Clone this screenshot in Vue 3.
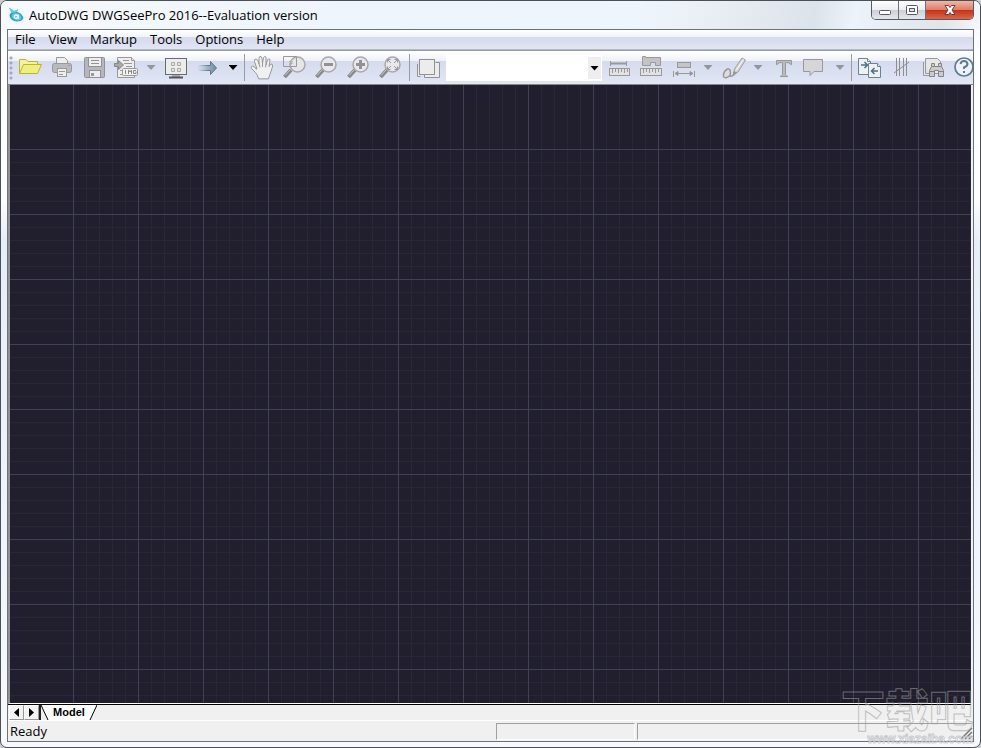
<script setup>
import { ref } from 'vue'

const menus = ['File', 'View', 'Markup', 'Tools', 'Options', 'Help']
const layer = ref('')
</script>

<template>
  <div class="window">
    <header class="titlebar">
      <svg class="logo" viewBox="0 0 16 16" aria-hidden="true">
        <path d="M1 0.500 L6 4 L10 2.500 L9 5 Q14 6 15.500 11 Q14 14.500 9 14.500 Q3 14 1.500 9 Q1 7 3.500 5.500Z" fill="#2a9fd2" />
        <path d="M1 0.500 L6 4 L10 2.500 L8.500 5 L3.500 6Z" fill="#6dcfeb" />
        <ellipse cx="8.500" cy="9.700" rx="5" ry="3.500" transform="rotate(20 8.500 9.700)" fill="#62c8ea" />
        <circle cx="8" cy="9.700" r="1.700" fill="none" stroke="#fff" stroke-width="1.300" />
        <path d="M10.200 7.500v4.500" stroke="#fff" stroke-width="1.200" />
      </svg>
      <h1 class="title">AutoDWG DWGSeePro 2016--Evaluation version</h1>
      <div class="caption">
        <button class="cap" type="button" aria-label="Minimize">
          <svg viewBox="0 0 14 12"><rect x="1.500" y="6.500" width="11" height="4" rx="1" fill="#fff" stroke="#555a66" /></svg>
        </button>
        <button class="cap" type="button" aria-label="Maximize">
          <svg viewBox="0 0 14 12"><rect x="1.500" y="1.500" width="11" height="9" rx="1" fill="#fff" stroke="#555a66" /><rect x="4.500" y="4.500" width="5" height="3" fill="#dfe2e8" stroke="#555a66" /></svg>
        </button>
        <button class="cap close" type="button" aria-label="Close">
          <svg viewBox="0 0 14 12"><path d="M2 1.500h3.500L7 3.500l1.500-2H12L9 6l3 4.500H8.500L7 8.500l-1.500 2H2L5 6Z" fill="#fff" stroke="#6b3a3a" /></svg>
        </button>
      </div>
    </header>

    <main class="client">
      <nav class="menubar" aria-label="Main menu">
        <button v-for="m in menus" :key="m" type="button" class="menu">{{ m }}</button>
      </nav>

      <div class="toolbar" role="toolbar" aria-label="Tools">
        <span class="grip"></span>
        <button class="tool" type="button" aria-label="Open">
          <svg viewBox="0 0 32 32" stroke="#b9b534" fill="#f4f1a0" stroke-linejoin="round"><path d="M5.500 21.500V7.500H12l2 2h9.500v4" /><path d="M5.500 21.500l4-9h18l-4 9Z" fill="#f1ee80" /></svg>
        </button>
        <button class="tool" type="button" aria-label="Print">
          <svg viewBox="0 0 32 32" stroke="#999" fill="#eee"><path d="M10.500 12V5.500h8l3 3V12" /><rect x="6.500" y="11.500" width="19" height="9" rx="2" fill="#b8babd" /><rect x="11.500" y="16.500" width="9" height="8" /><path d="M13 19.500h6M13 22.500h4M22 13.500h2" /></svg>
        </button>
        <button class="tool" type="button" aria-label="Save">
          <svg viewBox="0 0 32 32" stroke="#909295" fill="#b5b7ba"><rect x="6.500" y="5.500" width="20" height="20" rx="1" /><rect x="10.500" y="5.500" width="13" height="9" fill="#eee" /><path d="M13 8.500h8M13 11.500h8" /><rect x="11.500" y="18.500" width="11" height="7" fill="#ededed" /><rect x="13" y="21" width="3" height="3" fill="#999" stroke="none" /></svg>
        </button>
        <button class="tool" type="button" aria-label="Export image">
          <svg viewBox="0 0 32 32" stroke="#989898" fill="#eee"><path d="M7.500 5.500h14l3 3v17h-17Z" /><path d="M21.500 5.500v3h3M13 8.500h6M14 11.500h8M16 14.500h6M10 18.500h3M10 22.500h3" /><path d="M4.500 11.500h4v-3l5 4.500-5 4.500v-3h-4Z" fill="#aaa" stroke="#888" /><rect x="12.500" y="16.500" width="15" height="7" rx="1" fill="#f2f2f2" /><path d="M15.500 18v4M18.500 22v-4l1.500 2 1.500-2v4M26 18.500h-2.500v3H26v-2" fill="none" stroke="#888" /></svg>
        </button>
        <button class="drop" type="button" aria-label="Export options"><i class="tri"></i></button>
        <button class="tool" type="button" aria-label="Full screen">
          <svg viewBox="0 0 32 32" stroke="#666b70" fill="#ececec"><rect x="5.500" y="6.500" width="21" height="16" /><path d="M12 24h8" stroke="#777" /><path d="M9 25.500h14" stroke="#555" stroke-width="2" /><path d="M11.500 10.500h3v3h-3ZM17.500 10.500h3v3h-3ZM11.500 16.500h3v3h-3ZM17.500 16.500h3v3h-3Z" fill="#e4e4e4" stroke="#aaa" /></svg>
        </button>
        <button class="tool" type="button" aria-label="Next">
          <svg viewBox="0 0 32 32"><defs><linearGradient id="ar"><stop offset="0" stop-color="#b9cbd6" stop-opacity="0.200" /><stop offset="0.500" stop-color="#9db6c3" /><stop offset="1" stop-color="#6b8b9c" /></linearGradient><linearGradient id="ae"><stop offset="0" stop-color="#59788b" stop-opacity="0" /><stop offset="0.600" stop-color="#59788b" /></linearGradient></defs><path d="M6 13.500h12.500v-4l6 6.500-6 6.500v-4H6Z" fill="url(#ar)" stroke="url(#ae)" /></svg>
        </button>
        <button class="drop" type="button" aria-label="Next options"><i class="tri on"></i></button>
        <span class="sep"></span>
        <button class="tool" type="button" aria-label="Pan">
          <svg viewBox="0 0 32 32" fill="#f0f0f0" stroke="#999" stroke-linejoin="round" stroke-linecap="round"><path d="M11.500 26.500q-1-4-3-6l-4-4q-1-2 1-2.500 2 0 3.500 3h1L7.500 9.500Q7 7 9 7t3 5V6.500Q12 4 14 4.500q1 0 1.500 7l1-6Q17 4 19 5v8l1.500-5Q21 6 23 7.500q0 2-1 7 1.500-3 3-2.500 1.500 1-.5 6l-3 8.500Z" /><path d="M12 12l1 3M15.500 11.500v3M19 13l-.5 2" fill="none" /></svg>
        </button>
        <button class="tool" type="button" aria-label="Zoom window">
          <svg viewBox="0 0 32 32"><path d="M12 18l-6.500 7" stroke="#888" stroke-width="4" /><path d="M11 18l-5 5.500" stroke="#c7c7c7" stroke-width="1" /><circle cx="18.500" cy="12.500" r="7.500" fill="#e5e6e8" stroke="#a9a9a9" stroke-width="1.500" /><path d="M4.500 4.500h13v10h-13Z" fill="none" stroke="#999" /><path d="M10 9l3 3m0-3v3h-3" fill="none" stroke="#aaa" /></svg>
        </button>
        <button class="tool" type="button" aria-label="Zoom out">
          <svg viewBox="0 0 32 32"><path d="M12 18l-6.500 7" stroke="#888" stroke-width="4" /><path d="M11 18l-5 5.500" stroke="#c7c7c7" /><circle cx="17.500" cy="12.500" r="7.500" fill="#e8e9ea" stroke="#a9a9a9" stroke-width="1.500" /><path d="M13 12.500h9" stroke="#929292" stroke-width="3" /></svg>
        </button>
        <button class="tool" type="button" aria-label="Zoom in">
          <svg viewBox="0 0 32 32"><path d="M12 18l-6.500 7" stroke="#888" stroke-width="4" /><path d="M11 18l-5 5.500" stroke="#c7c7c7" /><circle cx="17.500" cy="12.500" r="7.500" fill="#e8e9ea" stroke="#a9a9a9" stroke-width="1.500" /><path d="M13 12.500h9M17.500 8v9" stroke="#929292" stroke-width="3" /></svg>
        </button>
        <button class="tool" type="button" aria-label="Zoom extents">
          <svg viewBox="0 0 32 32"><path d="M12 18l-6.500 7" stroke="#888" stroke-width="4" /><path d="M11 18l-5 5.500" stroke="#c7c7c7" /><circle cx="17.500" cy="12.500" r="7.500" fill="#e8e9ea" stroke="#a9a9a9" stroke-width="1.500" /><path d="M16 11l-4-4M12.500 10.500v-3h3M19 11l4-4M19.500 7.500h3v3M16 14l-4 4M12.500 14.500v3h3M19 14l4 4M19.500 17.500h3v-3" fill="none" stroke="#999" /></svg>
        </button>
        <span class="sep"></span>
        <button class="tool" type="button" aria-label="Layers">
          <svg viewBox="0 0 32 32" fill="#ececec" stroke="#929292"><path d="M5.500 12v12.500h3M12.500 21v4.500h15v-15h-4" /><rect x="7.500" y="7.500" width="15" height="15" /></svg>
        </button>
        <label class="combo">
          <select v-model="layer" aria-label="Layer"><option value=""></option></select>
          <span class="combo-btn"><i class="tri on"></i></span>
        </label>
        <button class="tool" type="button" aria-label="Measure length">
          <svg viewBox="0 0 32 32" fill="#e2e2e2" stroke="#999"><path d="M7 11.500h17" stroke-width="2" /><path d="M7.500 9v5M23.500 9v5" /><rect x="6.500" y="16.500" width="20" height="7" /><path d="M9.500 17v4M12.500 17v3M15.500 17v4M18.500 17v3M21.500 17v4M24.500 17v3" /></svg>
        </button>
        <button class="tool" type="button" aria-label="Measure area">
          <svg viewBox="0 0 32 32" fill="#c3c3c3" stroke="#999"><path d="M7.500 4.500h3v1h15v8h-5v-3h-5v3h-8Z" /><rect x="5.500" y="16.500" width="21" height="7" fill="#e2e2e2" /><path d="M8.500 17v4M11.500 17v3M14.500 17v4M17.500 17v3M20.500 17v4M23.500 17v3" /></svg>
        </button>
        <button class="tool" type="button" aria-label="Dimension">
          <svg viewBox="0 0 32 32" fill="#c3c5c8" stroke="#999"><rect x="10.500" y="10.500" width="13" height="5" /><path d="M6.500 19v6M27.500 19v6M8 21.500h18" /><path d="M8 21.500l3-2v4ZM26 21.500l-3-2v4Z" fill="#999" /></svg>
        </button>
        <button class="drop" type="button" aria-label="Dimension options"><i class="tri"></i></button>
        <button class="tool" type="button" aria-label="Freehand">
          <svg viewBox="0 0 32 32" fill="none" stroke="#999" stroke-linejoin="round"><path d="M13 23.500q-5 4-6.500 1-.5-5 4-7.500 4-1 2.500 7 2 1 5-2" stroke-width="1.500" fill="#ddd" /><path d="M16.500 22l1-5L25 6l3.500 2L21 20Z" fill="#d3d3d3" stroke="#a0a0a0" /><path d="M19 18.500l7.500-11" stroke="#fff" /><path d="M16 23l1-3.500 2.500 1.500Z" fill="#999" /></svg>
        </button>
        <button class="drop" type="button" aria-label="Freehand options"><i class="tri"></i></button>
        <button class="tool" type="button" aria-label="Text">
          <svg viewBox="0 0 32 32" fill="#bcbcbc" stroke="#999"><path d="M9.500 8.500h15v4h-1q-.5-2-4-2h-1v12q0 1.500 2.500 2h-8q2.500-.5 2.500-2v-12h-1q-4 0-4 2h-1Z" /></svg>
        </button>
        <button class="tool" type="button" aria-label="Callout">
          <svg viewBox="0 0 32 32" fill="#d6d6d8" stroke="#999"><path d="M4.500 7.500h19v12H15l-4 4v-4H4.500Z" /></svg>
        </button>
        <button class="drop" type="button" aria-label="Callout options"><i class="tri"></i></button>
        <span class="sep"></span>
        <button class="tool" type="button" aria-label="Compare">
          <svg viewBox="0 0 32 32" fill="#edf1f3" stroke="#6b8492"><path d="M4.500 6.500h9l3 3v13h-12Z" /><path d="M14.500 11.500h9l3 3v11h-12Z" /><path d="M13.500 6.500v3h3M23.500 11.500v3h3" /><path d="M7 13h6M10.500 10l3 3-3 3M24 19h-6M20.500 16l-3 3 3 3" fill="none" stroke="#4c7184" stroke-width="1.500" /></svg>
        </button>
        <button class="tool" type="button" aria-label="Count">
          <svg viewBox="0 0 32 32" fill="none" stroke="#8e8e8e"><path d="M10.500 6v18M13.500 6v18M17.500 6v18M20.500 6v18M8 21l15-11" /></svg>
        </button>
        <button class="tool" type="button" aria-label="Find">
          <svg viewBox="0 0 32 32" fill="#e8e8e8" stroke="#999"><path d="M5.500 10v13.500h7M7.500 6.500h12l3 3v12h-15Z" /><path d="M11.500 24.500v-6l2-4v-3h3v3h4v-3h3v3l2 4v6h-5v-6h-4v6Z" fill="#ccc" stroke="#858585" /><path d="M12 19.500h4M21 19.500h4M13.500 14.500h3M20.500 14.500h3" stroke="#858585" /></svg>
        </button>
        <button class="tool" type="button" aria-label="Help">
          <svg viewBox="0 0 32 32" fill="none" stroke="#5b7b90"><circle cx="14" cy="15" r="9" stroke-width="1.700" fill="#eef2f8" /><path d="M10.500 12q.5-3 3.500-3t3.500 3q0 2-3.500 3.500V17" stroke-width="2" /><path d="M14 19v2" stroke-width="2" /></svg>
        </button>
      </div>

      <section class="canvas" aria-label="Drawing"></section>

      <div class="tabs">
        <button class="nav" type="button" aria-label="Previous sheet"><i class="arrow left"></i></button>
        <button class="nav" type="button" aria-label="Next sheet"><i class="arrow right"></i></button>
        <span class="bar"></span>
        <button class="tab" type="button">
          <svg viewBox="0 0 56 15" aria-hidden="true"><path d="M0 0L7 15H49L56 0Z" fill="#fff" /><path d="M0 0L7 15M49 15L56 0" stroke="#000" /></svg>
          <span>Model</span>
        </button>
      </div>

      <footer class="status">
        <span class="ready">Ready</span>
        <span class="pane"></span>
        <span class="pane wide"></span>
      </footer>
    </main>

    <svg class="resize" viewBox="0 0 14 14" aria-hidden="true"><path d="M2 13L13 2M6 13L13 6M10 13L13 10" stroke="#777" stroke-width="1.500" /></svg>
    <div class="mark" aria-hidden="true">
      <span class="mark-name">下载吧</span>
      <span class="mark-url">www.xiazaiba.com</span>
    </div>
  </div>
</template>

<style>
body { background: #c9ccd0; }
</style>

<style scoped>
* { box-sizing: border-box; }
button { font: inherit; color: inherit; border: 0; padding: 0; margin: 0; background: none; }
svg { display: block; }

.window {
  position: relative;
  display: flex;
  flex-direction: column;
  height: 100vh;
  padding: 0 6px 5px;
  border: 1px solid #4c4f54;
  border-radius: 7px;
  overflow: hidden;
  background: linear-gradient(#f0f6fc 0, #fff 60px, #fbfdff 200px, #e6eefa 240px, #f6faff 100%);
  font-family: "Open Sans", "Noto Sans", sans-serif;
  font-size: 13px;
  color: #000;
}
.titlebar {
  display: flex;
  align-items: center;
  height: 28px;
  flex: none;
  margin: 0 -6px;
  padding: 0 6px 0 7px;
  background: linear-gradient(100deg, #f7fafc 0, #eef5fc 30%, #edf5fd 65%, #edf2f8 69%, #dde3ea 83%, #ecf3fb 87%, #dfe5e9 96%, #f5f7fa 100%);
}
.logo { width: 16px; height: 16px; }
.title { margin: 0 0 0 5px; font-size: 13px; font-weight: 400; line-height: 26px; white-space: nowrap; }
.caption { display: flex; align-self: flex-start; height: 19px; margin-left: auto; border: 1px solid #555a63; border-top: 0; border-radius: 0 0 5px 5px; overflow: hidden; }
.cap { display: grid; place-items: center; width: 27px; border-right: 1px solid #6c7079; background: linear-gradient(#fff 0, #eceef1 48%, #cdd0d8 52%, #e4e7ee 100%); }
.cap svg { width: 14px; height: 12px; }
.close { width: 47px; border: 0; background: linear-gradient(#f1b7a9 0, #df7d68 48%, #c5341b 52%, #d8664b 100%); }

.client { display: flex; flex-direction: column; flex: 1; min-height: 0; border: 1px solid #6d7278; background: #f0f0f0; }
.menubar {
  display: flex;
  gap: 13px;
  height: 20px;
  flex: none;
  padding-left: 7px;
  border-bottom: 1px solid #b4b9c8;
  background: linear-gradient(#fff 0, #f1f3f9 7px, #d5daec 7px, #e1e5f5 100%);
}
.menu { line-height: 19px; }
.toolbar {
  display: flex;
  height: 35px;
  flex: none;
  overflow: hidden;
  border-top: 1px solid #999b9f;
  border-bottom: 1px solid #85878c;
  background: linear-gradient(#fff 0, #eff1f8 10px, #d5dbee 10px, #e2e6f5 100%);
}
.grip { flex: none; width: 6px; margin: 4px 0; background: radial-gradient(circle at 3px 3px, #a3a9bd 1px, transparent 2px) 0 0 / 6px 5px; }
.tool { flex: none; width: 32px; padding-top: 1px; }
.tool svg { width: 32px; height: 32px; }
.drop { display: grid; place-items: center; flex: none; width: 18px; }
.tri { width: 9px; height: 5px; background: #94969b; clip-path: polygon(0 0, 100% 0, 50% 100%); }
.tri.on { background: #000; }
.sep { flex: none; width: 5px; margin: 3px 0; background: linear-gradient(#999ca3, #999ca3) 2px 0 / 1px 100% no-repeat; }
.combo { position: relative; flex: none; width: 156px; height: 26px; margin: 4px 1px 0 2px; padding: 2px; border: 0; background: #fff; }
.combo select { appearance: none; width: 100%; height: 100%; border: 0; background: #fff; }
.combo-btn { position: absolute; top: 2px; right: 1px; bottom: 2px; width: 13px; display: grid; place-items: center; background: #eee; pointer-events: none; }

/* major lines, empty corner, top strip, minor rows, left strip, minor columns */
.canvas {
  flex: 1;
  min-height: 0;
  margin-right: 2px;
  border-left: 2px solid #929292;
  border-bottom: 1px solid #fff;
  background:
    linear-gradient(90deg, #3f4257 1px, transparent 1px) 63px 0 / 65px 65px,
    linear-gradient(#3f4257 1px, transparent 1px) 0 64px / 65px 65px,
    linear-gradient(#211e2d, #211e2d) 0 0 / 63px 64px no-repeat,
    linear-gradient(90deg, #292736 1px, #211e2d 1px) 63px 0 / 13px 64px repeat-x,
    linear-gradient(#292736 1px, transparent 1px) 0 64px / 13px 13px,
    linear-gradient(#211e2d, #211e2d) 0 0 / 63px 100% no-repeat,
    linear-gradient(90deg, #292736 1px, transparent 1px) 63px 0 / 13px 13px,
    #211e2d;
}
.tabs { display: flex; height: 17px; flex: none; padding-left: 1px; margin-right: 2px; border-top: 1px solid #000; background: #f0f0f0; border-bottom: 1px solid #fff; }
.nav { display: grid; place-items: center; width: 15px; height: 15px; border: 1px solid #999; border-left-color: #fff; border-top-color: #fff; background: #f3f3f3; }
.arrow { width: 5px; height: 9px; background: #000; }
.left { clip-path: polygon(100% 0, 100% 100%, 0 50%); }
.right { clip-path: polygon(0 0, 100% 50%, 0 100%); }
.bar { width: 2px; background: #222; }
.tab { display: grid; place-items: center; width: 56px; height: 15px; font: bold 11px/15px "Liberation Sans", Arial, sans-serif; }
.tab svg, .tab span { grid-area: 1 / 1; }
.tab svg { width: 56px; height: 15px; }

.status { display: flex; height: 20px; flex: none; gap: 2px; padding: 2px 1px 1px 2px; }
.ready { flex: 487; line-height: 17px; }
.pane { flex: 138; border: 1px solid #a0a0a0; border-right-color: #fff; border-bottom-color: #fff; }
.wide { flex: 335; }

.resize { position: absolute; right: 7px; bottom: 7px; width: 14px; height: 14px; }
.mark { position: absolute; right: 7px; bottom: 1px; display: flex; flex-direction: column; align-items: flex-end; color: transparent; pointer-events: none; white-space: nowrap; }
.mark-name { font: 900 44px/48px "Noto Sans CJK SC", sans-serif; -webkit-text-stroke: 1px rgba(155, 155, 162, 0.600); }
.mark-url { font: bold 12px/14px "Liberation Sans", Arial, sans-serif; color: rgba(255, 255, 255, 0.600); -webkit-text-stroke: 1px rgba(160, 160, 165, 0.500); }
</style>
